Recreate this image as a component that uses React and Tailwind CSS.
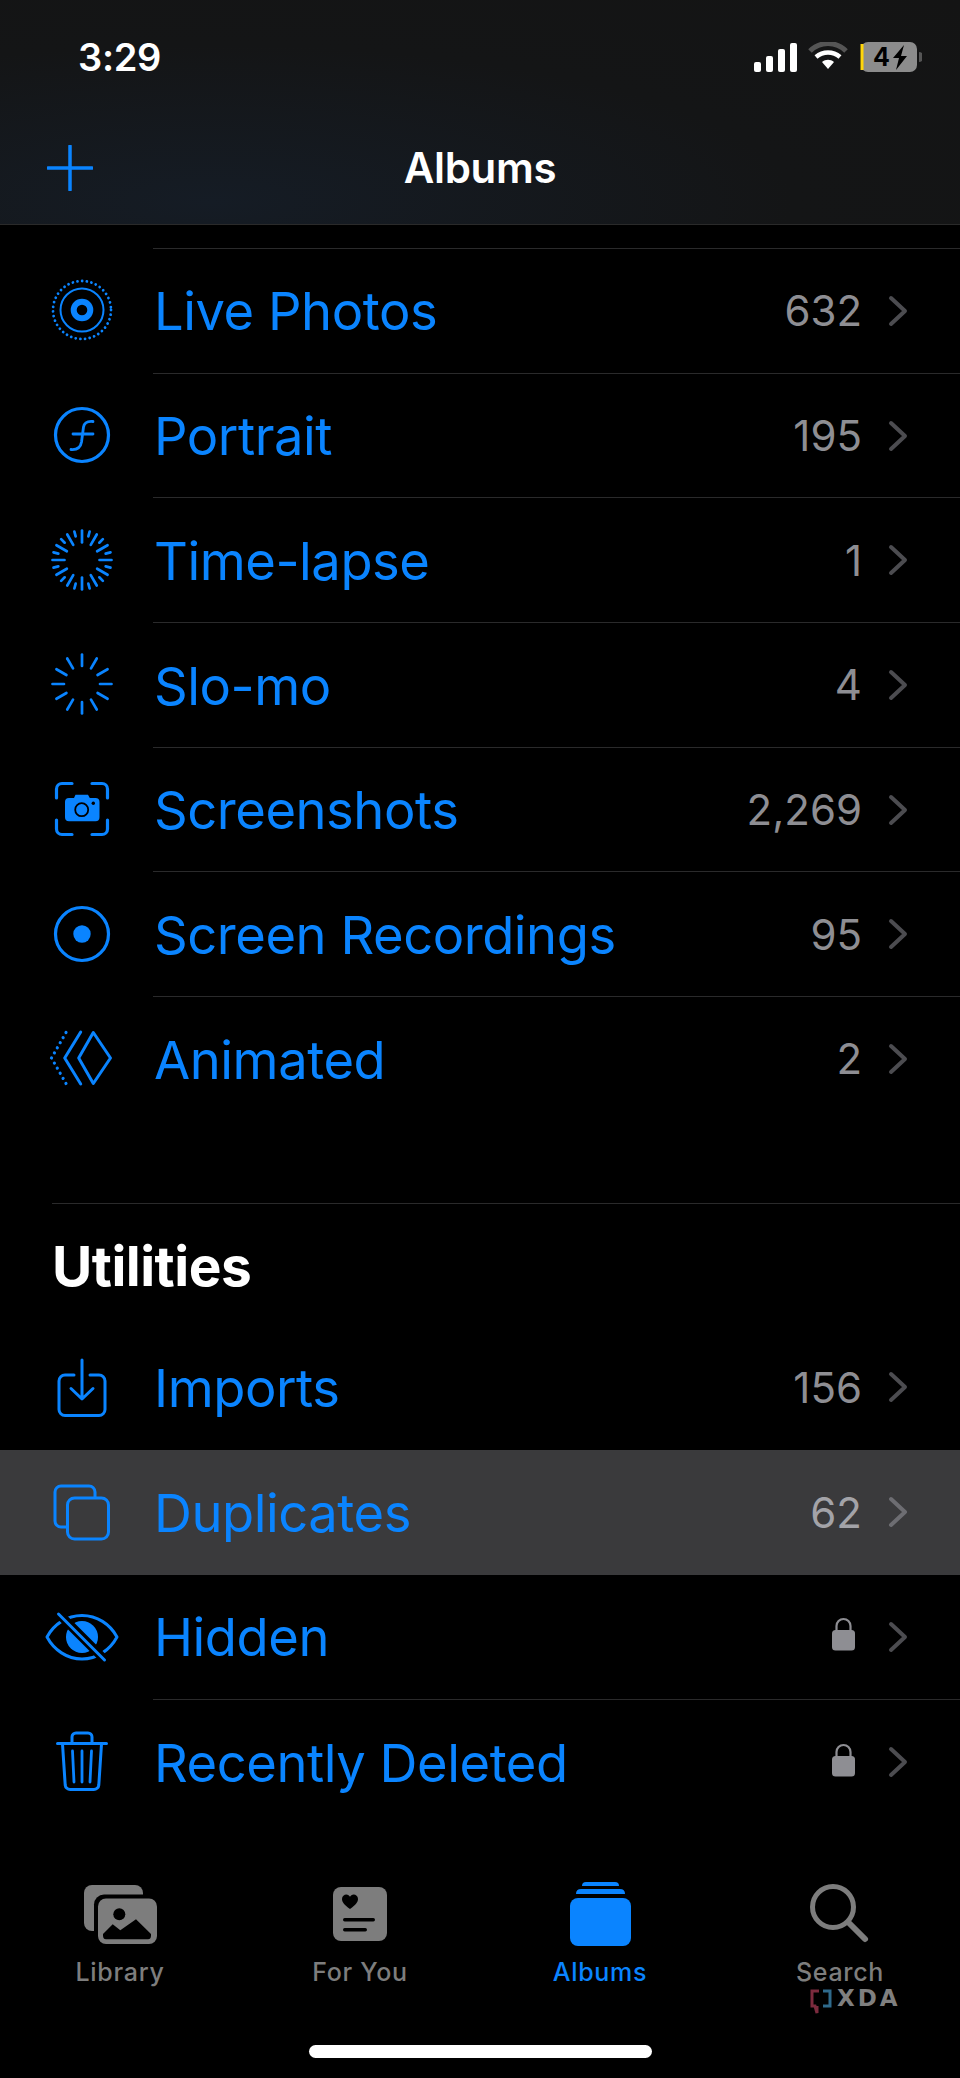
const BLUE = "#0a84ff";

function Ticks({ n, outer, inner, shortInner }) {
  return Array.from({ length: n }).map((_, i) => {
    const a = (i * 2 * Math.PI) / n;
    const r = shortInner && i % 2 ? shortInner : inner;
    return (
      <line key={i} x1={40 + Math.sin(a) * r} y1={40 - Math.cos(a) * r} x2={40 + Math.sin(a) * outer} y2={40 - Math.cos(a) * outer} stroke={BLUE} strokeWidth="2.7" strokeLinecap="round" />
    );
  });
}

const Svg = ({ children }) => (
  <svg width="80" height="80" viewBox="0 0 80 80" fill="none" stroke={BLUE} strokeLinecap="round" strokeLinejoin="round">{children}</svg>
);

const icons = {
  live: (
    <Svg>
      <circle cx="40" cy="40" r="29" strokeWidth="2.8" strokeDasharray="0.01 4.7" />
      <circle cx="40" cy="40" r="21.5" strokeWidth="2" />
      <circle cx="40" cy="40" r="8.3" strokeWidth="6" />
    </Svg>
  ),
  portrait: (
    <Svg>
      <circle cx="40" cy="40" r="26.5" strokeWidth="3.2" />
      <path d="M51 26.5C46 26 42.500 27 41.500 32L39.500 47C38.500 53 35 55 29 54.500M31 39H51" strokeWidth="2.800" />
    </Svg>
  ),
  timelapse: <Svg><Ticks n={24} outer={29.5} inner={17.5} shortInner={24.5} /></Svg>,
  slomo: <Svg><Ticks n={12} outer={29.5} inner={18} /></Svg>,
  screenshots: (
    <Svg>
      <path d="M30 14.500H20a5.500 5.500 0 0 0-5.500 5.500v9M50 14.500h10a5.500 5.500 0 0 1 5.500 5.500v9M30 65.500H20a5.500 5.500 0 0 1-5.500-5.500v-9M50 65.500h10a5.500 5.500 0 0 0 5.500-5.500v-9" strokeWidth="3.200" />
      <path stroke="none" fill={BLUE} d="M27 29h5l1.500-3.300h12.500l1.800 3.300h5.700a4 4 0 0 1 4 4v15.300a4 4 0 0 1-4 4H27a4 4 0 0 1-4-4V33a4 4 0 0 1 4-4Z" />
      <circle cx="39.700" cy="40.700" r="6.500" stroke="#000" strokeWidth="1.800" />
      <circle cx="51.300" cy="34.300" r="1.700" fill="#000" stroke="none" />
    </Svg>
  ),
  recordings: (
    <Svg>
      <circle cx="40" cy="40" r="26.500" strokeWidth="3.200" />
      <circle cx="40" cy="40" r="8.700" fill={BLUE} stroke="none" />
    </Svg>
  ),
  animated: (
    <Svg>
      <path d="M38.700 14 22.700 40l16 26" strokeWidth="3" />
      <path d="M51.300 14.500 36.700 40l14.600 25.500L68.500 40Z" strokeWidth="3" />
      <path d="M24 14.500 9.500 40 24 65.500" strokeWidth="3.200" strokeDasharray="0.01 5.850" />
    </Svg>
  ),
  imports: (
    <Svg>
      <path d="M32 28H23a6 6 0 0 0-6 6v28.500a6 6 0 0 0 6 6h34a6 6 0 0 0 6-6V34a6 6 0 0 0-6-6h-9" strokeWidth="3" />
      <path d="M40 13v38M29 41.500 40 52l11-10.500" strokeWidth="3" />
    </Svg>
  ),
  duplicates: (
    <Svg>
      <path d="M24 55H19a6 6 0 0 1-6-6V20a6 6 0 0 1 6-6h28a6 6 0 0 1 6 6v5" strokeWidth="3" strokeLinecap="butt" />
      <rect x="25.500" y="26" width="41" height="41" rx="7" strokeWidth="3" />
    </Svg>
  ),
  hidden: (
    <Svg>
      <path d="M5 40C12 27 25 18.500 40 18.500S68 27 75 40C68 53 55 62 40 62S12 53 5 40Z" strokeWidth="3" />
      <circle cx="40" cy="40" r="16" fill={BLUE} stroke="none" />
      <path d="M17 17 63 63" stroke="#000" strokeWidth="9" strokeLinecap="butt" />
      <path d="M16.500 17 62.500 63" strokeWidth="3" />
    </Svg>
  ),
  trash: (
    <Svg>
      <path d="M15.500 21.500h49M30 21v-6a4 4 0 0 1 4-4h12a4 4 0 0 1 4 4v6" strokeWidth="3" />
      <path d="M20.500 22l2.700 41a5 5 0 0 0 5 4.500h23.600a5 5 0 0 0 5-4.500l2.700-41" strokeWidth="3" />
      <path d="M30.500 29l1.500 31M40 29v31M49.500 29l-1.500 31" strokeWidth="2.800" />
    </Svg>
  ),
};

const Lock = () => (
  <svg width="23" height="34" viewBox="0 0 23 34" fill="none" className="-mt-[5px] mr-[7px]">
    <path d="M4.500 15V9a7 7 0 0 1 14 0v6" stroke="#8e8e93" strokeWidth="2.200" />
    <rect y="13" width="23" height="20.500" rx="3.500" fill="#8e8e93" />
  </svg>
);

const Chevron = ({ color }) => (
  <svg width="20" height="32" viewBox="0 0 20 32" fill="none" className="ml-[26px] mr-[52px] shrink-0">
    <path d="M3 3l14 13L3 29" stroke={color} strokeWidth="4" strokeLinecap="round" strokeLinejoin="round" />
  </svg>
);

function Row({ icon, label, value, lock, highlighted, noline }) {
  return (
    <div className={highlighted ? "h-[125px] flex items-center bg-[#3a3a3c]" : "h-[124.700px] flex items-center"}>
      <div className="w-[122px] pl-[42px] shrink-0 flex items-center">{icons[icon]}</div>
      <div className={"ml-[31px] flex-1 self-stretch flex items-center " + (noline ? "" : "border-t border-[#2a2a2b]")}>
        <span className="flex-1 pl-[1px] pt-[2px] text-[52.500px] tracking-[-0.45px] text-[#0a84ff]">{label}</span>
        {lock ? <Lock /> : <span className={"text-[42px] " + (highlighted ? "text-[#a3a3a8]" : "text-[#8e8e93]")}>{value}</span>}
        <Chevron color={highlighted ? "#6d6d72" : "#4c4c50"} />
      </div>
    </div>
  );
}

const gray = "#7d7d7d";

const Library = () => (
  <svg width="73" height="59" viewBox="0 0 73 59" fill="none">
    <rect width="59" height="46" rx="8" fill={gray} />
    <rect x="10" y="9.500" width="66" height="53" rx="10" fill="#000" />
    <rect x="14" y="13.500" width="59" height="45.500" rx="8" fill={gray} />
    <circle cx="35.300" cy="29.300" r="6" fill="#000" />
    <path d="M19 49l9.700-9.700 7.600 6L52 34.300l15 14.700q.5 5.300-3 5.300H22q-3.500 0-3-5.300Z" fill="#000" />
  </svg>
);

const ForYou = () => (
  <svg width="54" height="54" viewBox="0 0 54 54" fill="none">
    <rect width="54" height="54" rx="8" fill={gray} />
    <path d="M17 22C11 17.500 9 15 9 12c0-3 2.300-4.500 4.300-4.500 1.800 0 3 1 3.700 2.300.7-1.300 1.900-2.300 3.700-2.300 2 0 4.300 1.500 4.300 4.500 0 3-2 5.500-8 10Z" fill="#000" />
    <rect x="10" y="31" width="32" height="3.500" rx="1.700" fill="#000" />
    <rect x="10" y="41" width="24" height="3.500" rx="1.700" fill="#000" />
  </svg>
);

const Albums = () => (
  <svg width="61" height="64" viewBox="0 0 61 64" fill="none">
    <path d="M12 4q0-4 4-4h29q4 0 4 4Z" fill={BLUE} />
    <path d="M6 12q0-5 5-5h39q5 0 5 5Z" fill={BLUE} />
    <rect y="16" width="61" height="48" rx="8" fill={BLUE} />
  </svg>
);

const Search = () => (
  <svg width="60" height="60" viewBox="0 0 60 60" fill="none">
    <circle cx="23" cy="23" r="20.500" stroke={gray} strokeWidth="5" />
    <path d="M39 39l16 16" stroke={gray} strokeWidth="6" strokeLinecap="round" />
  </svg>
);

function Tab({ icon, label, active }) {
  return (
    <div className="flex flex-col items-center">
      <div className="h-[66px] flex items-center justify-center">{icon}</div>
      <span className={"mt-[10px] text-[25px] leading-[30px] tracking-[0.7px] font-medium " + (active ? "text-[#0a84ff]" : "text-[#7d7d7d]")}>{label}</span>
    </div>
  );
}

export default function App() {
  return (
    <div className="relative w-[960px] h-[2078px] bg-black overflow-hidden font-['Inter',sans-serif]">
      <header className="h-[225px] bg-[radial-gradient(ellipse_at_22%_90%,#151c25_0%,#141516_55%,#141414_100%)] border-b border-[#2a2a2a] flex flex-col">
        <div className="h-[114px] flex items-center justify-between pl-[78px] pr-[38px]">
          <span className="text-[38px] font-semibold text-white tracking-[-0.3px]">3:29</span>
          <div className="flex items-center gap-[10px]">
            <svg width="46" height="30" viewBox="0 0 46 30">
              <rect x="2" y="20" width="7" height="10" rx="2" fill="#fff" />
              <rect x="14" y="14" width="7" height="16" rx="2" fill="#fff" />
              <rect x="26" y="7" width="7" height="23" rx="2" fill="#fff" />
              <rect x="38" y="1" width="7" height="29" rx="2" fill="#fff" />
            </svg>
            <svg width="40" height="30" viewBox="0 0 40 30" fill="none">
              <path d="M2 9c10-10 26-10 36 0" stroke="#555" strokeWidth="5" />
              <path d="M8 15c7-6 17-6 24 0" stroke="#fff" strokeWidth="4.500" />
              <path d="M14 20c3.500-3 8.500-3 12 0l-6 7Z" fill="#fff" />
            </svg>
            <svg width="62" height="32" viewBox="0 0 62 32" className="ml-[2px]">
              <rect x="1" y="1" width="56" height="30" rx="7" fill="#8c8c8c" />
              <path d="M2 3v26" stroke="#ffd60a" strokeWidth="3" />
              <text x="13" y="25" fontFamily="Inter, sans-serif" fontSize="25" fontWeight="700" fill="#000">4</text>
              <path d="M44 4l-11 13h6l-3 12 11-14h-6Z" fill="#000" />
              <path d="M59 11a5 5 0 0 1 0 10Z" fill="#555" />
            </svg>
          </div>
        </div>
        <div className="relative flex-1 flex items-start justify-center">
          <div className="absolute left-[47px] top-[31px]">
            <svg width="46" height="46" viewBox="0 0 46 46"><path d="M23 1v44M1 23h44" stroke={BLUE} strokeWidth="3.500" strokeLinecap="round" /></svg>
          </div>
          <span className="mt-[29px] text-[42px] leading-[50px] font-semibold text-white tracking-[-0.3px]">Albums</span>
        </div>
      </header>

      <div className="h-[23px]" />

      <section>
        <Row icon="live" label="Live Photos" value="632" />
        <Row icon="portrait" label="Portrait" value="195" />
        <Row icon="timelapse" label="Time-lapse" value="1" />
        <Row icon="slomo" label="Slo-mo" value="4" />
        <Row icon="screenshots" label="Screenshots" value="2,269" />
        <Row icon="recordings" label="Screen Recordings" value="95" />
        <Row icon="animated" label="Animated" value="2" />
      </section>

      <div className="mt-[82px] ml-[52px] border-t border-[#2a2a2b] pt-[32px]">
        <h2 className="text-[55px] leading-[60px] font-bold text-white tracking-[-0.5px]">Utilities</h2>
      </div>

      <section className="mt-[29px]">
        <Row icon="imports" label="Imports" value="156" noline />
        <Row icon="duplicates" label="Duplicates" value="62" highlighted noline />
        <Row icon="hidden" label="Hidden" lock noline />
        <Row icon="trash" label="Recently Deleted" lock />
      </section>

      <nav className="absolute left-0 right-0 top-[1881px] grid grid-cols-4">
        <Tab icon={<Library />} label="Library" />
        <Tab icon={<ForYou />} label="For You" />
        <Tab icon={<Albums />} label="Albums" active />
        <Tab icon={<Search />} label="Search" />
      </nav>

      <div className="absolute left-[810px] top-[1989px] flex items-start gap-[5px]">
        <svg width="22" height="26" viewBox="0 0 22 26" fill="none">
          <path d="M9 2H2v15h3l2 7v-7" stroke="#7c2b3e" strokeWidth="3" />
          <path d="M13 2h7v15h-7" stroke="#2f6a8c" strokeWidth="3" />
        </svg>
        <span className="text-[23px] leading-[19px] font-bold text-[#7f7f7f] tracking-[3px] font-['DejaVu_Sans',sans-serif]">XDA</span>
      </div>

      <div className="absolute left-[309px] top-[2045px] w-[343px] h-[13px] rounded-full bg-white" />
    </div>
  );
}
